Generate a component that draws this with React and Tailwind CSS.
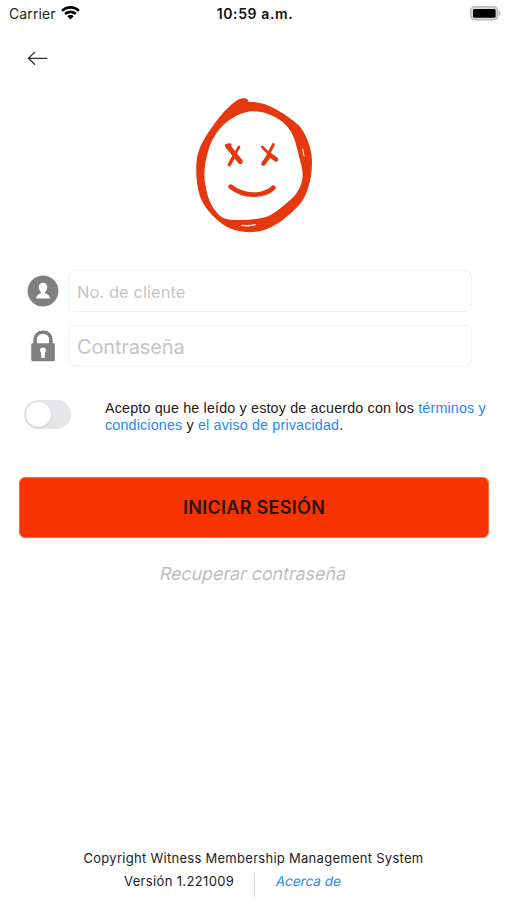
import { useState } from 'react'

function StatusBar() {
  return (
    <div className="grid grid-cols-3 items-center h-7 pl-[9px] pr-[6px] text-[14px] leading-[18px] text-[#222]">
      <div className="flex items-center gap-[5px]">
        <span className="tracking-[0.1px]">Carrier</span>
        <svg className="w-[19px] h-[14px] -mt-[2px]" viewBox="0 0 19 14" fill="#000">
          <path d="M9.5 0C13.2 0 16.4 1.4 18.8 3.9L17 5.8C15 3.8 12.4 2.7 9.5 2.7S4 3.8 2 5.8L.2 3.9C2.6 1.4 5.8 0 9.5 0z" />
          <path d="M9.5 4.6C12 4.6 14.1 5.5 15.7 7.1L13.9 9C12.7 7.9 11.2 7.2 9.5 7.2S6.3 7.9 5.1 9L3.3 7.1C4.9 5.5 7 4.6 9.5 4.6z" />
          <path d="M9.5 9C10.8 9 11.9 9.5 12.7 10.3L9.5 13.6L6.3 10.3C7.1 9.5 8.2 9 9.5 9z" />
        </svg>
      </div>
      <span className="justify-self-center font-semibold tracking-[0.6px] text-[#111] whitespace-nowrap">10:59 a.m.</span>
      <svg className="justify-self-end w-[31px] h-[15px] -mt-[2px]" viewBox="0 0 31 15">
        <rect x="0.9" y="0.9" width="26.6" height="12.8" rx="3.6" fill="#ddd" stroke="#bdbdbd" strokeWidth="1.6" />
        <rect x="3" y="3" width="22.6" height="8.8" rx="1.4" fill="#000" />
        <path d="M28.6 4.9c2.4.6 2.4 4.2 0 4.8z" fill="#b5b5b5" />
      </svg>
    </div>
  )
}

function Logo() {
  return (
    <svg className="w-[140px] h-[150px]" viewBox="0 0 420 450" fill="none" stroke="#e5380f" strokeLinecap="round" strokeLinejoin="round">
      <path
        fill="#e5380f"
        fillRule="evenodd"
        stroke="none"
        d="M180 25C188 26 189 32 191 36C215 34 240 41 264 53C290 65 316 84 343 107C362 131 376 165 380 198C383 235 378 266 370 292C361 322 348 342 327 361C303 384 270 410 240 419C205 430 165 429 135 415C106 402 75 372 57 344C39 315 32 270 34 222C36 180 57 145 79 115C98 86 121 57 150 35C161 27 170 24 180 25ZM190 65C165 69 140 83 119 101C96 122 77 153 69 185C59 220 55 252 61 284C66 317 77 348 97 369C107 382 121 388 137 389C175 391 220 390 249 379C277 365 300 344 326 320C342 302 352 282 353 254C352 229 345 213 340 190C333 164 329 143 317 124C303 101 282 86 258 76C236 66 213 62 190 65Z"
      />
      <path strokeWidth="15" d="M129 169L166 215" />
      <path strokeWidth="10" d="M125 166L135 165M150 193L133 224" />
      <path strokeWidth="8" d="M162 171L150 192" />
      <path strokeWidth="8" d="M232 171L252 192" />
      <path strokeWidth="14" d="M252 193L273 208" />
      <path strokeWidth="9" d="M265 164L253 187" />
      <path strokeWidth="13" d="M254 194L235 221" />
      <path strokeWidth="14" d="M137 290C165 312 197 317 226 312C243 309 257 302 265 293" />
      <path stroke="#fff" strokeWidth="3" d="M353 177L357 198" />
      <path stroke="#fff" strokeWidth="4" d="M171 406C184 408 198 408 211 404" />
    </svg>
  )
}

function UserIcon() {
  return (
    <svg className="w-[32px] h-[32px]" viewBox="0 0 32 32">
      <circle cx="16" cy="16" r="15.4" fill="#808083" />
      <path
        fill="#fff"
        d="M16 7.8C18.8 7.8 20.2 9.8 20.2 12.3C20.2 14.4 19.2 16 18.1 17.1V18.3C20 19.4 22.5 19.7 22.8 23.4H9.2C9.5 19.7 12 19.4 13.9 18.3V17.1C12.8 16 11.8 14.4 11.8 12.3C11.8 9.8 13.2 7.8 16 7.8Z"
      />
    </svg>
  )
}

function LockIcon() {
  return (
    <svg className="w-[24px] h-[32px]" viewBox="0 0 24 32">
      <path d="M4.1 14V10C4.1 5 7.4 2.3 12 2.3S19.9 5 19.9 10V14" fill="none" stroke="#808083" strokeWidth="3.6" />
      <rect x="0.2" y="13.2" width="23.7" height="18" rx="1.4" fill="#808083" />
      <path fill="#fff" d="M12 17.6C13.9 17.6 15 18.9 15 20.3C15 21.4 14.4 22.1 13.9 22.6V27.2C13.9 28.4 10.1 28.4 10.1 27.2V22.6C9.6 22.1 9 21.4 9 20.3C9 18.9 10.1 17.6 12 17.6Z" />
    </svg>
  )
}

export default function App() {
  const [accepted, setAccepted] = useState(false)

  return (
    <div className="flex flex-col h-[900px] w-full overflow-hidden bg-white font-[Inter,sans-serif] text-[#222]">
      <StatusBar />

      {/* Back */}
      <button className="w-[22px] h-[16px] ml-[27px] mt-[22px]">
        <svg className="w-[22px] h-[16px]" viewBox="0 0 22 16" fill="none" stroke="#333" strokeWidth="1.3">
          <path d="M20.3 8.3H1.6M8 1.9L1.5 8.3L8 14.7" />
        </svg>
      </button>

      <div className="ml-[185px] mt-[24px] h-[150px]">
        <Logo />
      </div>

      {/* Credentials */}
      <div className="flex flex-col gap-[13px] mt-[30px] pl-[27px] pr-[35px]">
        <div className="flex items-center h-[42px]">
          <div className="w-[41px] shrink-0">
            <UserIcon />
          </div>
          <input
            className="w-full h-full rounded-[7px] border border-[#f0f0f0] pl-[8px] pt-px text-[16.5px] tracking-[0.05px] placeholder:text-[#c5c5c7]"
            placeholder="No. de cliente"
          />
        </div>
        <div className="flex items-center h-[42px]">
          <div className="w-[41px] pl-[4px] shrink-0">
            <LockIcon />
          </div>
          <input
            type="password"
            className="w-full h-full rounded-[7px] border border-[#f0f0f0] pl-[8px] pt-[2px] text-[20px] tracking-[-0.15px] placeholder:text-[#c5c5c7]"
            placeholder="Contraseña"
          />
        </div>
      </div>

      {/* Terms */}
      <div className="flex mt-[33px] pl-[24px]">
        <button
          onClick={() => setAccepted(!accepted)}
          className={`flex items-center w-[47px] h-[29px] rounded-full p-[2px] ${accepted ? 'bg-green-500 justify-end' : 'bg-[#e6e6e8]'}`}
        >
          <span className="w-[25px] h-[25px] rounded-full bg-white shadow-sm" />
        </button>
        <p className="ml-[34px] font-['Liberation_Sans',sans-serif] text-[14.3px] leading-[17px] tracking-[0.17px] text-[#1a1a1a] whitespace-nowrap">
          Acepto que he leído y estoy de acuerdo con los <a className="text-[#2589f5]">términos y</a>
          <br />
          <a className="text-[#2589f5]">condiciones</a> y <a className="text-[#2589f5]">el aviso de privacidad</a>.
        </p>
      </div>

      <button className="ml-[19px] mr-[18px] mt-[43px] h-[61px] shrink-0 rounded-[6px] border border-[#ff6a40] bg-[#f73400] text-[18px] font-semibold tracking-[0.3px] text-[#2a1208]">
        INICIAR SESIÓN
      </button>

      <a className="self-center mt-[24px] text-[18px] leading-[24px] tracking-[-0.1px] -skew-x-12 text-[#bfbfbf]">Recuperar contraseña</a>

      {/* Footer */}
      <footer className="mt-auto h-[51px] text-[13px] leading-[18px]">
        <p className="text-center tracking-[0.28px]">Copyright Witness Membership Management System</p>
        <div className="flex items-start pl-[124px] mt-[5px]">
          <span className="w-[130px] tracking-[0.35px]">Versión 1.221009</span>
          <span className="w-px h-[24px] mt-px bg-[#dcdcdc]" />
          <a className="ml-[21px] text-[13.5px] -skew-x-12 text-[#2589f5]">Acerca de</a>
        </div>
      </footer>
    </div>
  )
}
